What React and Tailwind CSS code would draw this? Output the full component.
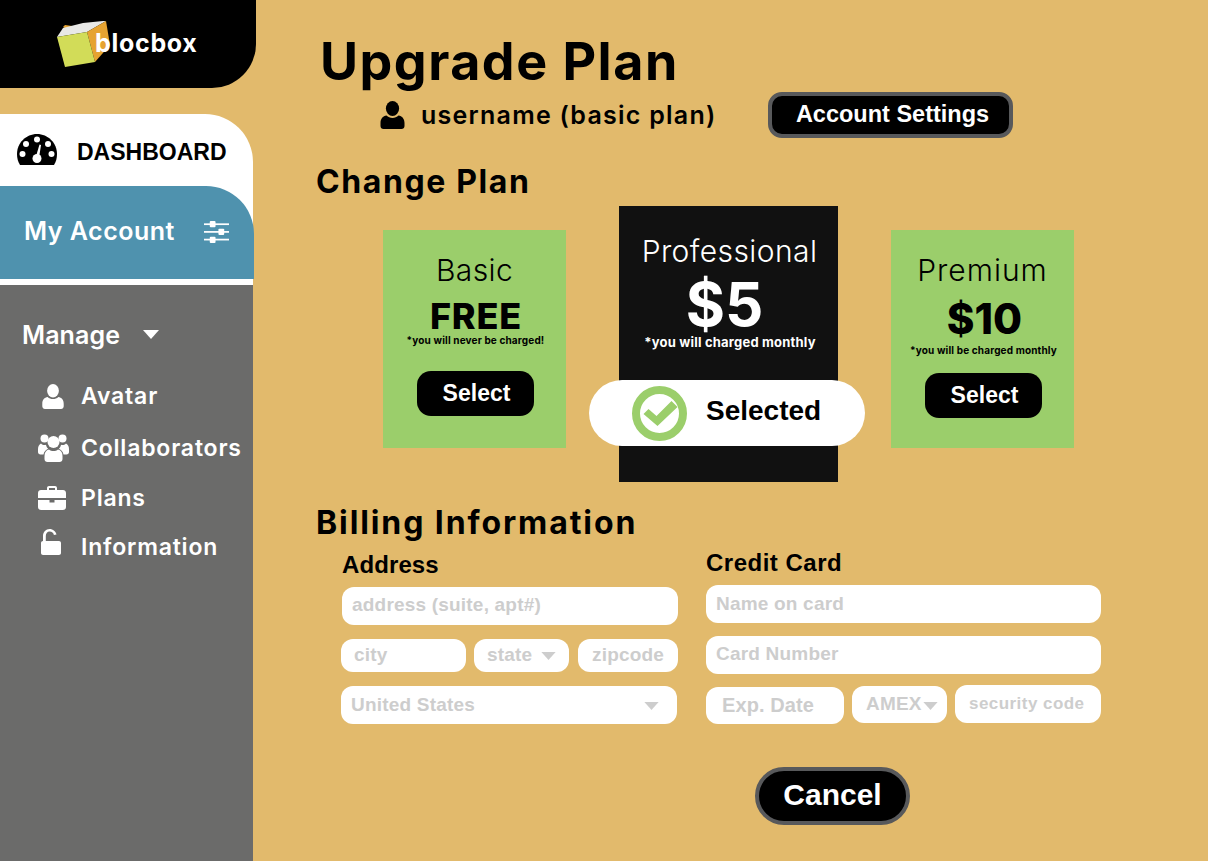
import React from 'react';

const Caret = ({ className }) => (
  <svg viewBox="0 0 16 9" className={className} fill="currentColor"><path d="M0 0h16L8 9z" /></svg>
);

const UserIcon = ({ className }) => (
  <svg viewBox="0 0 24 28" className={className} fill="currentColor">
    <ellipse cx="12" cy="7.5" rx="6.6" ry="7.5" />
    <path d="M6 14.5c1.6 1.6 3.7 2.4 6 2.4s4.400-.8 6-2.400c3.600.6 6 3.200 6 7.500v3c0 1.700-1.300 3-3 3H3c-1.700 0-3-1.300-3-3v-3c0-4.300 2.400-6.900 6-7.500z" />
  </svg>
);

const GroupIcon = ({ className }) => (
  <svg viewBox="0 0 31 28" className={className} fill="currentColor">
    <circle cx="6.500" cy="4.500" r="4" />
    <circle cx="24.500" cy="4.500" r="4" />
    <circle cx="15.500" cy="8" r="6" />
    <path d="M3 9.500c1 1 2.200 1.500 3.500 1.500.6 0 1 0 1.500-.2.300 1.600 1 3 2.200 4-2.500 1-4.200 3-4.700 5.700H2.500C1 20.500 0 19.600 0 18v-3c0-2.500 1-4.500 3-5.500zM28 9.500c2 1 3 3 3 5.500v3c0 1.600-1 2.500-2.500 2.500h-3c-.5-2.700-2.200-4.700-4.700-5.700 1.200-1 1.900-2.400 2.200-4 .5.200.9.200 1.500.2 1.300 0 2.500-.5 3.500-1.500z" />
    <path d="M11 15.500c1.200 1 2.800 1.500 4.500 1.500s3.300-.5 4.500-1.500c3 .6 4.500 3 4.500 6.500v3c0 1.700-1.300 3-3 3h-12c-1.700 0-3-1.300-3-3v-3c0-3.500 1.500-5.900 4.500-6.500z" />
  </svg>
);

const BriefcaseIcon = ({ className }) => (
  <svg viewBox="0 0 28 24" className={className} fill="currentColor">
    <path fillRule="evenodd" d="M9 4V2c0-1.100.9-2 2-2h6c1.100 0 2 .9 2 2v2h6c1.700 0 3 1.300 3 3v5H0V7c0-1.700 1.300-3 3-3h6zm2 0h6V2h-6v2z" />
    <path d="M0 14h11.500v2.500h5V14H28v7c0 1.700-1.300 3-3 3H3c-1.700 0-3-1.300-3-3v-7z" />
  </svg>
);

const UnlockIcon = ({ className }) => (
  <svg viewBox="0 0 20 26" className={className} fill="currentColor">
    <path d="M2 12V7c0-4 3-7 6.500-7S15 2.500 15.500 5.500l-2.600.4C12.500 4 11 2.600 8.500 2.600 6.500 2.600 4.800 4.600 4.800 7v5H18c1.100 0 2 .9 2 2v10c0 1.100-.9 2-2 2H2c-1.100 0-2-.9-2-2V14c0-1.100.9-2 2-2z" />
  </svg>
);

const GaugeIcon = ({ className }) => (
  <svg viewBox="0 0 40 31" className={className}>
    <path fill="currentColor" d="M20 0C9 0 0 9 0 20c0 4 1 8 3 11h34c2-3 3-7 3-11C40 9 31 0 20 0z" />
    <g fill="#fff">
      <circle cx="20" cy="5.500" r="3" />
      <circle cx="9" cy="10" r="3" />
      <circle cx="31" cy="10" r="3" />
      <circle cx="5.500" cy="20" r="3" />
      <circle cx="34.500" cy="20" r="3" />
      <circle cx="20" cy="24.500" r="4.500" />
      <path d="M22.500 10.500l1.500.4-2 13h-3.500z" />
    </g>
  </svg>
);

const SlidersIcon = ({ className }) => (
  <svg viewBox="0 0 26 24" className={className} fill="currentColor">
    <rect x="0" y="3" width="26" height="1.800" />
    <rect x="0" y="11" width="26" height="1.800" />
    <rect x="0" y="19" width="26" height="1.800" />
    <rect x="6" y="0.500" width="6" height="6.500" rx="1" />
    <rect x="15" y="8.500" width="6" height="6.500" rx="1" />
    <rect x="6" y="17" width="6" height="6.500" rx="1" />
  </svg>
);

const Logo = () => (
  <svg viewBox="0 0 60 50" className="w-[60px] h-[50px] shrink-0">
    <polygon points="7,7 9,5 16,6 12,10" fill="#e6a331" />
    <polygon points="1,17 7,8 27,3 47,1 50,1 31,12" fill="#e8e8e6" />
    <polygon points="31,12 50,1 54,25 39,42" fill="#e6a331" />
    <polygon points="1,17 31,12 39,42 9,47" fill="#d2dc58" />
  </svg>
);

const NavItem = ({ icon, label, className }) => (
  <div className={`flex items-center h-10 ml-[38px] ${className}`}>
    <div className="w-[43px] flex justify-start">{icon}</div>
    <span className="font-[Inter,sans-serif] font-semibold text-[23px] tracking-[0.8px] text-white">{label}</span>
  </div>
);

const SelectBtn = ({ className }) => (
  <button className={`w-[117px] h-[45px] pl-[2px] bg-black text-white rounded-[14px] font-bold text-[23px] ${className}`}>Select</button>
);

const Field = ({ placeholder, className, textClass = 'text-[19px] tracking-[0.2px]' }) => (
  <input
    placeholder={placeholder}
    className={`bg-white rounded-[12px] font-bold outline-none min-w-0 placeholder:text-[#cdcdcd] ${textClass} ${className}`}
  />
);

const Dropdown = ({ label, className, caretClass }) => (
  <div className={`bg-white rounded-[12px] font-bold text-[#cdcdcd] flex items-center text-[19px] tracking-[0.2px] ${className}`}>
    <span>{label}</span>
    <Caret className={caretClass} />
  </div>
);

export default function App() {
  return (
    <div className="h-[861px] w-[1208px] overflow-hidden flex bg-[#e2ba6c] text-black font-['Liberation_Sans',Arial,sans-serif]">
      {/* sidebar */}
      <aside className="w-[256px] shrink-0 flex flex-col">
        <div className="h-[88px] bg-black rounded-br-[44px] flex items-start pl-[56px] pt-[20px]">
          <Logo />
          <span className="ml-[-21px] mt-[5px] font-[Inter,sans-serif] font-bold text-[25px] tracking-[0.7px] leading-[36px] text-white">blocbox</span>
        </div>
        <div className="mt-[26px] w-[253px] bg-white rounded-tr-[48px]">
          <div className="h-[72px] flex items-center pl-[17px]">
            <GaugeIcon className="w-[40px] h-[31px] text-black mt-[-2px]" />
            <span className="ml-[20px] mt-[4px] font-bold text-[23px]">DASHBOARD</span>
          </div>
          <div className="w-[254px] h-[93px] bg-[#4f92ae] rounded-tr-[48px] flex items-center pl-[24px] pb-[2px]">
            <span className="font-[Inter,sans-serif] font-semibold text-[25px] tracking-[0.5px] text-white">My Account</span>
            <SlidersIcon className="ml-[29px] w-[25px] h-[24px] text-white" />
          </div>
          <div className="h-[6px]" />
        </div>
        <div className="w-[253px] flex-1 bg-[#6b6b6a] pt-[30px]">
          <div className="flex items-center h-10 pl-[22px] text-white">
            <span className="mt-[2px] font-[Inter,sans-serif] font-semibold text-[25px] tracking-[0.1px]">Manage</span>
            <Caret className="ml-[23px] w-[16px] h-[9px] mt-[-2px]" />
          </div>
          <NavItem className="mt-[21px]" label="Avatar" icon={<UserIcon className="ml-[3px] w-[24px] h-[25px] text-white" />} />
          <NavItem className="mt-[12px]" label="Collaborators" icon={<GroupIcon className="w-[31px] h-[28px] text-white" />} />
          <NavItem className="mt-[10px]" label="Plans" icon={<BriefcaseIcon className="w-[28px] h-[24px] text-white" />} />
          <NavItem className="mt-[9px]" label="Information" icon={<UnlockIcon className="ml-[3px] w-[20px] h-[26px] text-white mt-[-10px]" />} />
        </div>
      </aside>

      {/* main */}
      <main className="flex-1 pl-[60px] pt-[32px]">
        <h1 className="ml-[4px] h-[60px] leading-[60px] font-[Inter,sans-serif] font-bold text-[52px] tracking-[1.5px]">Upgrade Plan</h1>
        <div className="flex items-center h-[46px]">
          <UserIcon className="ml-[64px] w-[25px] h-[28px]" />
          <span className="ml-[16px] mt-[2px] font-[Inter,sans-serif] font-semibold text-[25px] tracking-[1.250px]">username (basic plan)</span>
          <button className="ml-auto mr-[195px] w-[245px] h-[46px] pl-[4px] bg-black border-4 border-[#58595b] rounded-[14px] text-white font-bold text-[23.500px]">Account Settings</button>
        </div>
        <h2 className="mt-[22px] h-[42px] leading-[44px] font-[Inter,sans-serif] font-bold text-[32px] tracking-[1.6px]">Change Plan</h2>

        {/* plans */}
        <div className="mt-[4px] ml-[67px] flex items-start">
          <div className="w-[183px] h-[218px] mt-[24px] bg-[#9bce6b] pt-[22px] flex flex-col items-center">
            <div className="h-[38px] leading-[36px] font-[Inter,sans-serif] font-light text-[30px] tracking-[0.4px]">Basic</div>
            <div className="mt-[8px] ml-[3px] h-[36px] leading-[36px] font-[Inter,sans-serif] font-extrabold text-[36px] tracking-[0.8px]">FREE</div>
            <div className="ml-[2px] h-[12px] leading-[12px] font-[Inter,sans-serif] font-bold text-[10px] tracking-[0.15px]">*you will never be charged!</div>
            <SelectBtn className="mt-[25px] ml-[2px]" />
          </div>
          <div className="relative w-[219px] h-[276px] ml-[53px] bg-[#111111] text-white pt-[26px] flex flex-col items-center">
            <div className="ml-[2px] h-[38px] leading-[38px] font-[Inter,sans-serif] font-light text-[30px] tracking-[0.4px]">Professional</div>
            <div className="mt-[4px] mr-[8px] h-[60px] leading-[60px] font-[Inter,sans-serif] font-bold text-[60px]">$5</div>
            <div className="mt-[1px] ml-[3px] h-[14px] leading-[14px] font-[Inter,sans-serif] font-bold text-[13px] tracking-[0.2px]">*you will charged monthly</div>
            <div className="absolute top-[174px] left-[-30px] w-[276px] h-[66px] bg-white rounded-full flex items-center pl-[43px] text-black">
              <div className="w-[55px] h-[55px] rounded-full border-[8px] border-[#9bce6b] flex items-center justify-center">
                <svg viewBox="0 0 34 26" className="w-[35px] h-[26px] ml-[1px]" fill="#9bce6b"><path d="M5 9l8 7L28 1l6 6-20 19L0 14z" /></svg>
              </div>
              <span className="ml-[19px] mt-[-5px] font-bold text-[28px]">Selected</span>
            </div>
          </div>
          <div className="w-[183px] h-[218px] mt-[24px] ml-[53px] bg-[#9bce6b] pt-[22px] flex flex-col items-center">
            <div className="h-[38px] leading-[36px] font-[Inter,sans-serif] font-light text-[30px] tracking-[1px]">Premium</div>
            <div className="mt-[7px] ml-[4px] h-[44px] leading-[44px] font-[Inter,sans-serif] font-extrabold text-[42px]">$10</div>
            <div className="mt-[3px] ml-[2px] h-[12px] leading-[12px] font-[Inter,sans-serif] font-bold text-[10px] tracking-[0.15px]">*you will be charged monthly</div>
            <SelectBtn className="mt-[17px] ml-[2px]" />
          </div>
        </div>

        {/* billing */}
        <h2 className="mt-[20px] h-[40px] leading-[42px] font-[Inter,sans-serif] font-bold text-[32px] tracking-[1.9px]">Billing Information</h2>
        <div className="ml-[25px] flex items-start">
          <div className="w-[337px] flex flex-col">
            <div className="mt-[10px] ml-[1px] h-[26px] leading-[26px] font-bold text-[24px] tracking-[0.1px]">Address</div>
            <Field placeholder="address (suite, apt#)" className="mt-[9px] ml-[1px] w-[336px] h-[38px] pl-[10px] pb-[2px]" />
            <div className="mt-[14px] flex h-[33px]">
              <Field placeholder="city" className="w-[125px] pl-[13px]" />
              <Dropdown label="state" className="ml-[8px] w-[95px] pl-[13px]" caretClass="ml-[9px] w-[15px] h-[8px]" />
              <Field placeholder="zipcode" className="ml-[9px] w-[100px] pl-[14px]" />
            </div>
            <Dropdown label="United States" className="mt-[14px] w-[336px] h-[38px] pl-[10px]" caretClass="ml-auto mr-[18px] w-[15px] h-[8px] mt-[2px]" />
          </div>
          <div className="ml-[28px] w-[395px] flex flex-col">
            <div className="mt-[8px] h-[26px] leading-[26px] font-bold text-[24px] tracking-[0.5px]">Credit Card</div>
            <Field placeholder="Name on card" className="mt-[9px] h-[38px] pl-[10px]" />
            <Field placeholder="Card Number" className="mt-[13px] h-[38px] pl-[10px] pb-[2px]" />
            <div className="mt-[11px] flex items-start">
              <Field placeholder="Exp. Date" textClass="text-[20px] tracking-[0.1px]" className="mt-[2px] w-[138px] h-[37px] pl-[16px]" />
              <Dropdown label="AMEX" className="mt-[1px] ml-[8px] w-[95px] h-[37px] pl-[14px]" caretClass="ml-[1px] w-[15px] h-[8px] mt-[2px]" />
              <Field placeholder="security code" textClass="text-[17px] tracking-[0.45px]" className="ml-[8px] w-[146px] h-[38px] pl-[14px]" />
            </div>
          </div>
        </div>
        <button className="block mt-[43px] ml-[439px] w-[155px] h-[58px] pb-[4px] bg-black border-4 border-[#58595b] rounded-full text-white font-bold text-[30px]">Cancel</button>
      </main>
    </div>
  );
}
